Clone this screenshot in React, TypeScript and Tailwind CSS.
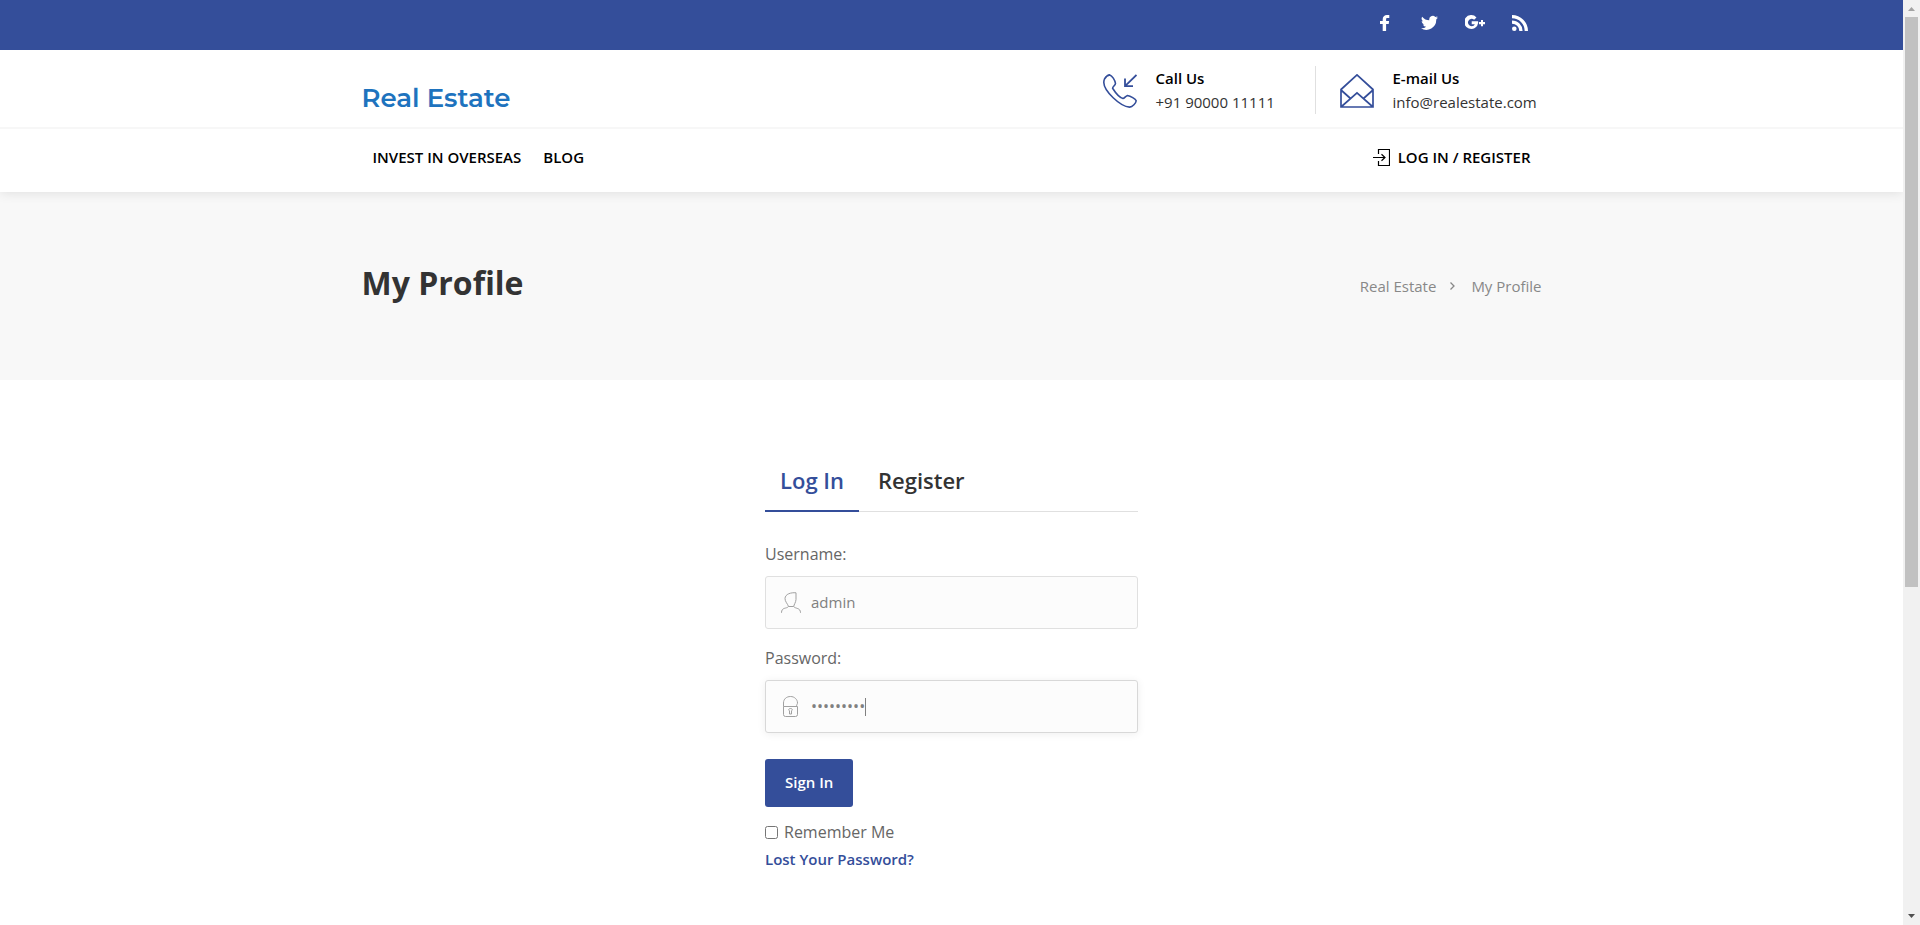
import React from "react";

const SOCIAL = [
  { label: "Facebook", width: 14, box: "0 0 14 16", path: "M9.3 0H7C4.400 0 2.700 1.600 2.700 4.300V6H0V9.100H2.700V16H6.100V9.100H8.700L9.100 6H6.100V4.200C6.100 3.300 6.500 2.900 7.400 2.900H9.300Z" },
  { label: "Twitter", width: 17, box: "0 0 24 20", path: "M24 2.400a9.800 9.800 0 0 1-2.800.8A5 5 0 0 0 23.300.5a9.900 9.900 0 0 1-3.100 1.200 4.900 4.900 0 0 0-8.400 4.500A14 14 0 0 1 1.700 1a4.900 4.900 0 0 0 1.500 6.600 4.900 4.900 0 0 1-2.200-.6c-.1 2.300 1.600 4.400 3.900 4.900a5 5 0 0 1-2.200.1 4.900 4.900 0 0 0 4.600 3.400A9.900 9.900 0 0 1 0 17.500 14 14 0 0 0 21.500 5c1-.7 1.800-1.600 2.500-2.600z" },
  { label: "Google Plus", width: 20, box: "0 0 20 16", path: "M6.700 6.300V9.300H9.800C9.300 10.500 8.300 11.200 6.700 11.200A3.700 3.700 0 1 1 9.100 4.700L11.500 2.400A7 7 0 1 0 13.200 7.800Q13.200 7 13.100 6.300ZM16 5V7H14V9.300H16V11.300H18V9.300H20V7H18V5Z" },
  { label: "RSS", width: 16, box: "0 0 16 16", path: "M2.300 11.400a2.300 2.300 0 1 0 0 4.600 2.300 2.300 0 0 0 0-4.600zM0 5.400v3.300A7.300 7.300 0 0 1 7.300 16h3.300A10.600 10.600 0 0 0 0 5.400zM0 0v3.300A12.700 12.700 0 0 1 12.700 16H16A16 16 0 0 0 0 0z" },
];

function PhoneIcon() {
  return (
    <svg className="mt-0.5 size-[34px] shrink-0" viewBox="0 0 34 34" fill="none" stroke="#344e9a" strokeWidth="1.600" aria-hidden="true">
      <path d="M1.500 5C3 2.500 5 1 6.800.9 9 1.500 12 6 12.500 9.500 12.300 11.500 9.500 12.500 9.600 14.200 12 18 16.500 23.500 20 24.500 21.500 24.500 22.500 22 24.500 21.500 27.500 22 32.500 25 33.200 26.800 33 29 29.500 33.200 26.500 33.100 17 32.500 1 17 .8 8.500.8 7 1 6 1.500 5Z" />
      <path d="M33.500 1 22 12.200M22 4.500V12.200H30" strokeWidth="1.800" />
    </svg>
  );
}

function MailIcon() {
  return (
    <svg className="mt-0.5 size-[34px] shrink-0" viewBox="0 0 34 34" fill="none" stroke="#344e9a" strokeWidth="1.700" aria-hidden="true">
      <path d="M1 15.500 17 .9 33 15.500V33H1ZM1 16 10.500 24.500M33 16 23.500 24.500M1 33 17 18.800 33 33" />
    </svg>
  );
}

function LoginIcon() {
  return (
    <svg className="h-[17px] w-[17px]" viewBox="0 0 17 17" fill="none" stroke="currentColor" aria-hidden="true">
      <path d="M5.500 5V.5H16.500V16.500H5.500V12M0 8.500H12M8.500 5.200 12 8.500 8.500 11.800" strokeWidth="1.200" />
    </svg>
  );
}

function UserIcon() {
  return (
    <svg className="pointer-events-none absolute left-4 top-4 h-[21px] w-5" viewBox="0 0 20 21" fill="none" stroke="#a0a0a0" aria-hidden="true">
      <path d="M7.500 14.500C6.800 12 3.900 9.500 4 6.500 4.200 2 10 .3 15 .8V7.500C14.800 10.500 13 12.500 12.700 14.500M7.500 14.500C5.500 17 .5 15 .5 20.800M12.700 14.500C14.500 17 19.500 15.500 19.500 20.800M7.500 14.500H12.700" />
    </svg>
  );
}

function LockIcon() {
  return (
    <svg className="pointer-events-none absolute left-[18px] top-4 h-[21px] w-[15px]" viewBox="0 0 15 21" fill="none" stroke="#a0a0a0" aria-hidden="true">
      <path d="M.5 10.500H14.500V18.500Q14.500 20.500 12.500 20.500H2.500Q.5 20.500.5 18.500ZM.5 10.500V7C.5 3 3.500.5 7.500.5S14.500 3.500 14.500 7C14.500 8 13.500 8.500 13.500 10.500" />
      <path d="M6.500 14.800C5.200 14 5.500 12.500 7.500 12.500S9.800 14 8.500 14.800V18H6.500Z" />
    </svg>
  );
}

function Scrollbar() {
  return (
    <div className="flex w-[17px] shrink-0 flex-col items-center bg-[#f1f1f1]" aria-hidden="true">
      <svg className="h-[17px] w-[17px] shrink-0" viewBox="0 0 17 17"><path d="M5 11 8.500 7 12 11Z" fill="#a3a3a3" /></svg>
      <div className="w-[13px] flex-[16] bg-[#c1c1c1]" />
      <div className="flex-[9]" />
      <svg className="h-[17px] w-[17px] shrink-0" viewBox="0 0 17 17"><path d="M5 6 8.500 10 12 6Z" fill="#505050" /></svg>
    </div>
  );
}

const WRAP = "mx-auto flex w-full max-w-[1180px]";

export default function App() {
  return (
    <div className="flex h-screen overflow-hidden bg-white font-['Open_Sans',sans-serif] text-[15px] text-[#333]">
      <div className="min-w-0 flex-1 overflow-hidden">
        <div className="relative z-10 h-[50px] bg-[#344e9a]">
          <div className={`${WRAP} justify-end gap-[27px] pr-3.5 pt-[15px]`}>
            {SOCIAL.map((s) => (
              <a key={s.label} href="#" aria-label={s.label} className="text-white">
                <svg className="h-4" width={s.width} viewBox={s.box} fill="currentColor" aria-hidden="true"><path d={s.path} /></svg>
              </a>
            ))}
          </div>
        </div>

        <header className="relative bg-white shadow-[0_0_12px_rgba(0,0,0,0.12)]">
          <div className="border-b-2 border-[#f7f7f7]">
            <div className={`${WRAP} h-[77px] items-center justify-between`}>
              <a href="#" className="pt-[18px] font-['Montserrat',Inter,sans-serif] text-[26px] font-semibold leading-8 text-[#1e73be]">Real Estate</a>
              <div className="flex items-center pt-0.5">
                <PhoneIcon />
                <div className="ml-[19px] w-[124px] leading-6">
                  <strong className="block font-semibold text-black">Call Us</strong>
                  <span className="font-medium">+91 90000 11111</span>
                </div>
                <div className="ml-[35px] mr-6 h-12 border-l border-[#e0e0e0]" />
                <MailIcon />
                <div className="ml-[19px] w-[149px] leading-6">
                  <strong className="block font-semibold text-black">E-mail Us</strong>
                  <a href="#" className="font-medium">info@realestate.com</a>
                </div>
              </div>
            </div>
          </div>
          <nav className={`${WRAP} h-[63px] items-center justify-between px-[11px] pb-1.5 font-semibold text-black`}>
            <div className="flex gap-[22px]">
              <a href="#">INVEST IN OVERSEAS</a>
              <a href="#">BLOG</a>
            </div>
            <a href="#" className="flex items-center gap-2"><LoginIcon />LOG IN / REGISTER</a>
          </nav>
        </header>

        <section className="bg-[#f8f8f8]">
          <div className={`${WRAP} h-[188px] items-center justify-between`}>
            <h1 className="pb-1.5 text-[32px] font-bold leading-10">My Profile</h1>
            <ol className="flex items-center text-[#888]">
              <li><a href="#">Real Estate</a></li>
              <li className="ml-3.5 mr-4" aria-hidden="true">
                <svg className="h-2 w-[5px]" viewBox="0 0 5 8" fill="none" stroke="#888" strokeWidth="1.300"><path d="M.5.5 4 4 .5 7.500" /></svg>
              </li>
              <li>My Profile</li>
            </ol>
          </div>
        </section>

        <main className="mx-auto w-full max-w-[373px] pt-[74px]">
          <div role="tablist" className="flex h-[58px] border-b border-[#e0e0e0] text-[22px] font-semibold">
            <button role="tab" aria-selected="true" className="h-[58px] border-b-2 border-[#344e9a] px-[15px] pb-1 text-[#344e9a]">Log In</button>
            <button role="tab" aria-selected="false" className="h-[58px] border-b-2 border-transparent px-[19px] pb-1">Register</button>
          </div>
          <form onSubmit={(e) => e.preventDefault()} className="pt-7 text-base text-[#666]">
            <label htmlFor="username" className="block leading-7">Username:</label>
            <div className="relative mt-2">
              <UserIcon />
              <input id="username" type="text" defaultValue="admin" className="block h-[53px] w-full rounded-[3px] border border-[#e0e0e0] bg-[#fcfcfc] pb-0.5 pl-[45px] pr-4 text-[15px] font-medium text-[#808080] outline-none" />
            </div>
            <label htmlFor="password" className="mt-[15px] block leading-7">Password:</label>
            <div className="relative mt-2">
              <LockIcon />
              <input id="password" type="password" autoFocus defaultValue="password1" className="block h-[53px] w-full rounded-[3px] border border-[#d8d8d8] bg-[#fcfcfc] pb-0.5 pl-[45px] pr-4 text-base font-medium text-[#808080] caret-transparent shadow-[0_1px_8px_rgba(0,0,0,0.07)] outline-none" />
              <span className="pointer-events-none absolute left-[100px] top-[18px] h-[18px] w-px bg-[#808080]" aria-hidden="true" />
            </div>
            <button type="submit" className="mt-[26px] block h-12 rounded-[3px] bg-[#344e9a] px-5 pb-0.5 text-[15px] font-semibold text-white">Sign In</button>
            <div className="mt-[11px] flex items-center gap-1.5 leading-7">
              <input id="remember" type="checkbox" className="size-[13px]" />
              <label htmlFor="remember">Remember Me</label>
            </div>
            <a href="#" className="block text-[15px] font-semibold leading-[27px] text-[#344e9a]">Lost Your Password?</a>
          </form>
        </main>
      </div>
      <Scrollbar />
    </div>
  );
}
